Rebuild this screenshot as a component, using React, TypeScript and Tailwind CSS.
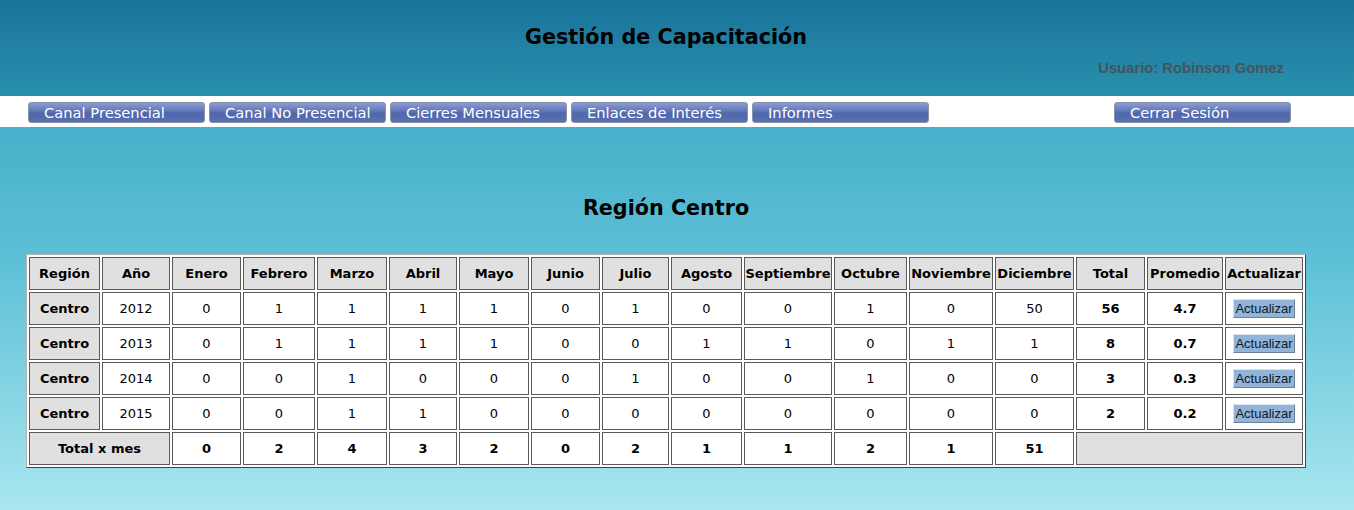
import React from 'react';

const months = ['Enero', 'Febrero', 'Marzo', 'Abril', 'Mayo', 'Junio', 'Julio', 'Agosto', 'Septiembre', 'Octubre', 'Noviembre', 'Diciembre'];
const colWidths = [71, 68, 69, 72, 70, 68, 70, 69, 67, 71, 88, 73, 84, 79, 69, 76, 78];

const rows = [
  { year: 2012, values: [0, 1, 1, 1, 1, 0, 1, 0, 0, 1, 0, 50], total: 56, avg: '4.7' },
  { year: 2013, values: [0, 1, 1, 1, 1, 0, 0, 1, 1, 0, 1, 1], total: 8, avg: '0.7' },
  { year: 2014, values: [0, 0, 1, 0, 0, 0, 1, 0, 0, 1, 0, 0], total: 3, avg: '0.3' },
  { year: 2015, values: [0, 0, 1, 1, 0, 0, 0, 0, 0, 0, 0, 0], total: 2, avg: '0.2' },
];
const totals = [0, 2, 4, 3, 2, 0, 2, 1, 1, 2, 1, 51];

const navItems = ['Canal Presencial', 'Canal No Presencial', 'Cierres Mensuales', 'Enlaces de Interés', 'Informes'];

const NavButton = ({ label, className = '' }: { label: string; className?: string }) => (
  <button className={`w-[177px] h-[21px] rounded-[3px] border border-[#8793a8] bg-[linear-gradient(#8a9bd3,#6479bb_40%,#5067ab_55%,#5a70b3)] text-left pl-[15px] text-white text-[14.7px] leading-[18px] font-['DejaVu_Sans',sans-serif] ${className}`}>
    {label}
  </button>
);

const cellBase = 'border border-[#5a5a5a] h-[33px] text-center text-[13px] text-black p-0';
const grayCell = `${cellBase} bg-[#e0e0e0] font-bold`;
const whiteCell = `${cellBase} bg-white`;

export default function App() {
  return (
    <div className="w-[1354px] h-[510px] overflow-hidden font-['DejaVu_Sans',sans-serif] bg-[linear-gradient(#34a1be,#5cbfd6_50%,#a9e6ef)]">
      {/* Header */}
      <div className="h-[96px] bg-[linear-gradient(#19739a,#2a90ad)] relative">
        <h1 className="w-[1332px] text-center pt-[23px] text-[20.7px] font-bold text-black leading-[28px]">Gestión de Capacitación</h1>
        <div className="absolute right-[70px] top-[57px] text-[14.8px] font-bold text-[#45535c] font-['Liberation_Sans',Arial,sans-serif]">
          Usuario: Robinson Gomez
        </div>
      </div>

      {/* Menu bar */}
      <div className="h-[31px] bg-white flex items-start pt-[6px] pl-[28px] gap-[4px]">
        {navItems.map((n) => (
          <NavButton key={n} label={n} />
        ))}
        <NavButton label="Cerrar Sesión" className="ml-[181px]" />
      </div>

      <h2 className="w-[1332px] text-center mt-[67px] text-[20.7px] font-bold text-black leading-[28px]">Región Centro</h2>

      <table className="mt-[32px] ml-[26px] w-[1280px] table-fixed border-separate border-spacing-[2px] border border-t-[#b4b4b4] border-l-[#b4b4b4] border-r-[#444444] border-b-[#444444] bg-white">
        <colgroup>
          {colWidths.map((w, i) => (
            <col key={i} style={{ width: w }} />
          ))}
        </colgroup>
        <thead>
          <tr>
            <th className={grayCell}>Región</th>
            <th className={grayCell}>Año</th>
            {months.map((m) => (
              <th key={m} className={grayCell}>{m}</th>
            ))}
            <th className={grayCell}>Total</th>
            <th className={grayCell}>Promedio</th>
            <th className={grayCell}>Actualizar</th>
          </tr>
        </thead>
        <tbody>
          {rows.map((r) => (
            <tr key={r.year}>
              <td className={grayCell}>Centro</td>
              <td className={whiteCell}>{r.year}</td>
              {r.values.map((v, i) => (
                <td key={i} className={whiteCell}>{v}</td>
              ))}
              <td className={`${whiteCell} font-bold`}>{r.total}</td>
              <td className={`${whiteCell} font-bold`}>{r.avg}</td>
              <td className={whiteCell}>
                <button className="bg-[#92b4d9] border border-t-[#d8e4f0] border-l-[#d8e4f0] border-r-[#6f7f90] border-b-[#6f7f90] px-[1px] h-[19px] text-[13px] leading-[16px] text-[#101828] font-['Liberation_Sans',Arial,sans-serif]">
                  Actualizar
                </button>
              </td>
            </tr>
          ))}
          <tr>
            <td colSpan={2} className={grayCell}>Total x mes</td>
            {totals.map((t, i) => (
              <td key={i} className={`${whiteCell} font-bold`}>{t}</td>
            ))}
            <td colSpan={3} className={`${cellBase} bg-[#e0e0e0]`}></td>
          </tr>
        </tbody>
      </table>
    </div>
  );
}
